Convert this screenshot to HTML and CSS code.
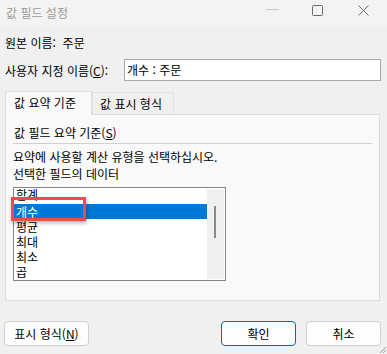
FILE: index.html
```html
<!DOCTYPE html>
<html lang="ko">
  <head>
    <meta charset="UTF-8" />
    <title>값 필드 설정</title>
    <link rel="stylesheet" href="styles.css">
  </head>
  <body>
    <div class="window">
      <div class="titlebar">
        <span class="title">값 필드 설정</span>
        <div class="controls">
          <svg class="ctl" width="14" height="12" viewBox="0 0 14 12"><path d="M0 5.5H13" stroke="#c8c8c8" stroke-width="1"/></svg>
          <svg class="ctl" width="12" height="12" viewBox="0 0 12 12"><rect x="0.5" y="0.5" width="10" height="10" rx="1" fill="none" stroke="#6a6a6a"/></svg>
          <svg class="ctl" width="12" height="12" viewBox="0 0 12 12"><path d="M0.5 0.5L10.5 10.5M10.5 0.5L0.5 10.5" stroke="#6a6a6a"/></svg>
        </div>
      </div>

      <div class="content">
        <div class="row source">원본 이름:&nbsp;&nbsp;주문</div>
        <div class="row custom">
          <label>사용자 지정 이름(<u>C</u>):</label>
          <div class="input">개수 : 주문</div>
        </div>

        <div class="tabs">
          <div class="tab active">값 요약 기준</div>
          <div class="tab">값 표시 형식</div>
        </div>
        <div class="panel">
          <div class="group-title">값 필드 요약 기준(<u>S</u>)</div>
          <div class="sep"></div>
          <p class="hint">요약에 사용할 계산 유형을 선택하십시오.</p>
          <p class="hint">선택한 필드의 데이터</p>
          <div class="listbox">
            <ul class="items">
              <li class="first">합계</li>
              <li class="selected">개수</li>
              <li>평균</li>
              <li>최대</li>
              <li>최소</li>
              <li>곱</li>
            </ul>
            <div class="scrollbar"><div class="thumb"></div></div>
            <div class="highlight"></div>
          </div>
        </div>

        <div class="buttons">
          <button class="btn format">표시 형식(<u>N</u>)</button>
          <div class="spacer"></div>
          <button class="btn ok">확인</button>
          <button class="btn">취소</button>
        </div>
      </div>
      <svg class="grip" width="8" height="8" viewBox="0 0 8 8">
        <path d="M7 1L1 7M7 4L4 7" stroke="#a0a0a0" stroke-width="1"/>
      </svg>
    </div>
  </body>
</html>
```

FILE: styles.css
```css
* {
  margin: 0;
  padding: 0;
  box-sizing: border-box;
}
body {
  background: #f0f0f0;
  font-family: "Noto Sans CJK KR", "Noto Sans", sans-serif;
  font-size: 12px;
  color: #000;
}
.window {
  position: relative;
  width: 387px;
  height: 354px;
  overflow: hidden;
}
.titlebar {
  height: 26px;
  background: #f3f3f3;
  display: flex;
  align-items: center;
  justify-content: space-between;
  padding-left: 6px;
}
.title {
  color: #9a9a9a;
  font-size: 12px;
  margin-top: -2px;
}
.controls {
  display: flex;
  align-items: flex-start;
  height: 26px;
  padding-top: 4px;
}
.ctl:nth-child(1) {
  margin-right: 32px;
}
.ctl:nth-child(2) {
  margin-right: 34px;
  margin-top: 1px;
}
.ctl:nth-child(3) {
  margin-right: 17px;
  margin-top: 1px;
}
.content {
  padding-left: 5px;
  padding-right: 6px;
}
.row {
  display: flex;
  align-items: center;
}
.source {
  margin-top: 5px;
  height: 22px;
}
.custom {
  margin-top: 6px;
  height: 22px;
}
.custom label {
  width: 119px;
}
.input {
  flex: 1;
  height: 22px;
  border: 1px solid #a8a8a8;
  background: #fff;
  padding-left: 2px;
  line-height: 20px;
}
.tabs {
  margin-top: 10px;
  display: flex;
  align-items: flex-end;
  height: 23px;
}
.tab {
  height: 22px;
  padding: 0 8px 0 7px;
  line-height: 22px;
  border: 1px solid #e3e3e3;
  border-bottom: none;
  background: #f0f0f0;
  width: 82px;
}
.tab.active {
  height: 24px;
  width: 87px;
  background: #f9f9f9;
  border-color: #dcdcdc;
  margin-bottom: -1px;
  position: relative;
  z-index: 1;
  line-height: 21px;
  padding-left: 8px;
}
.panel {
  width: 375px;
  height: 187px;
  background: #f9f9f9;
  border: 1px solid #dcdcdc;
  padding: 9px 7px 0 7px;
}
.group-title {
  height: 18px;
  line-height: 18px;
  padding-left: 1px;
}
.sep {
  margin-top: 1px;
  height: 1px;
  background: #d0d0d0;
}
.hint {
  height: 17px;
  line-height: 17px;
}
.sep + .hint {
  margin-top: 4px;
}
.listbox {
  position: relative;
  margin-top: 5px;
  width: 213px;
  height: 94px;
  border: 1px solid #858585;
  background: #fff;
  display: flex;
}
.items {
  list-style: none;
  flex: 1;
  padding-top: 1px;
  overflow: hidden;
}
.items li {
  height: 15px;
  line-height: 15px;
  padding-left: 2px;
}
.items li.first {
  line-height: 11px;
  overflow: hidden;
}
.items li.selected {
  background: #0078d7;
  color: #fff;
}
.scrollbar {
  width: 17px;
  margin: 1px 1px 1px 0;
  background: #f0f0f0;
  padding: 17px 0 0 7px;
}
.thumb {
  width: 2px;
  height: 32px;
  background: #8a8a8a;
}
.highlight {
  position: absolute;
  left: -3px;
  top: 9px;
  width: 75px;
  height: 24px;
  border: 3px solid #ef4a52;
  box-shadow: 1px 2px 4px rgba(0, 0, 0, 0.3);
}
.buttons {
  margin-top: 20px;
  display: flex;
  height: 25px;
  padding-left: -1px;
}
.spacer {
  flex: 1;
}
.btn {
  font-family: inherit;
  font-size: 12px;
  height: 25px;
  width: 75px;
  background: #fdfdfd;
  border: 1px solid #d0d0d0;
  border-radius: 4px;
  color: #000;
}
.btn.format {
  width: 85px;
  margin-left: -1px;
}
.btn.ok {
  border: 1.5px solid #0067c0;
  margin-right: 10px;
}
.grip {
  position: absolute;
  right: 0;
  bottom: 0;
}
```
